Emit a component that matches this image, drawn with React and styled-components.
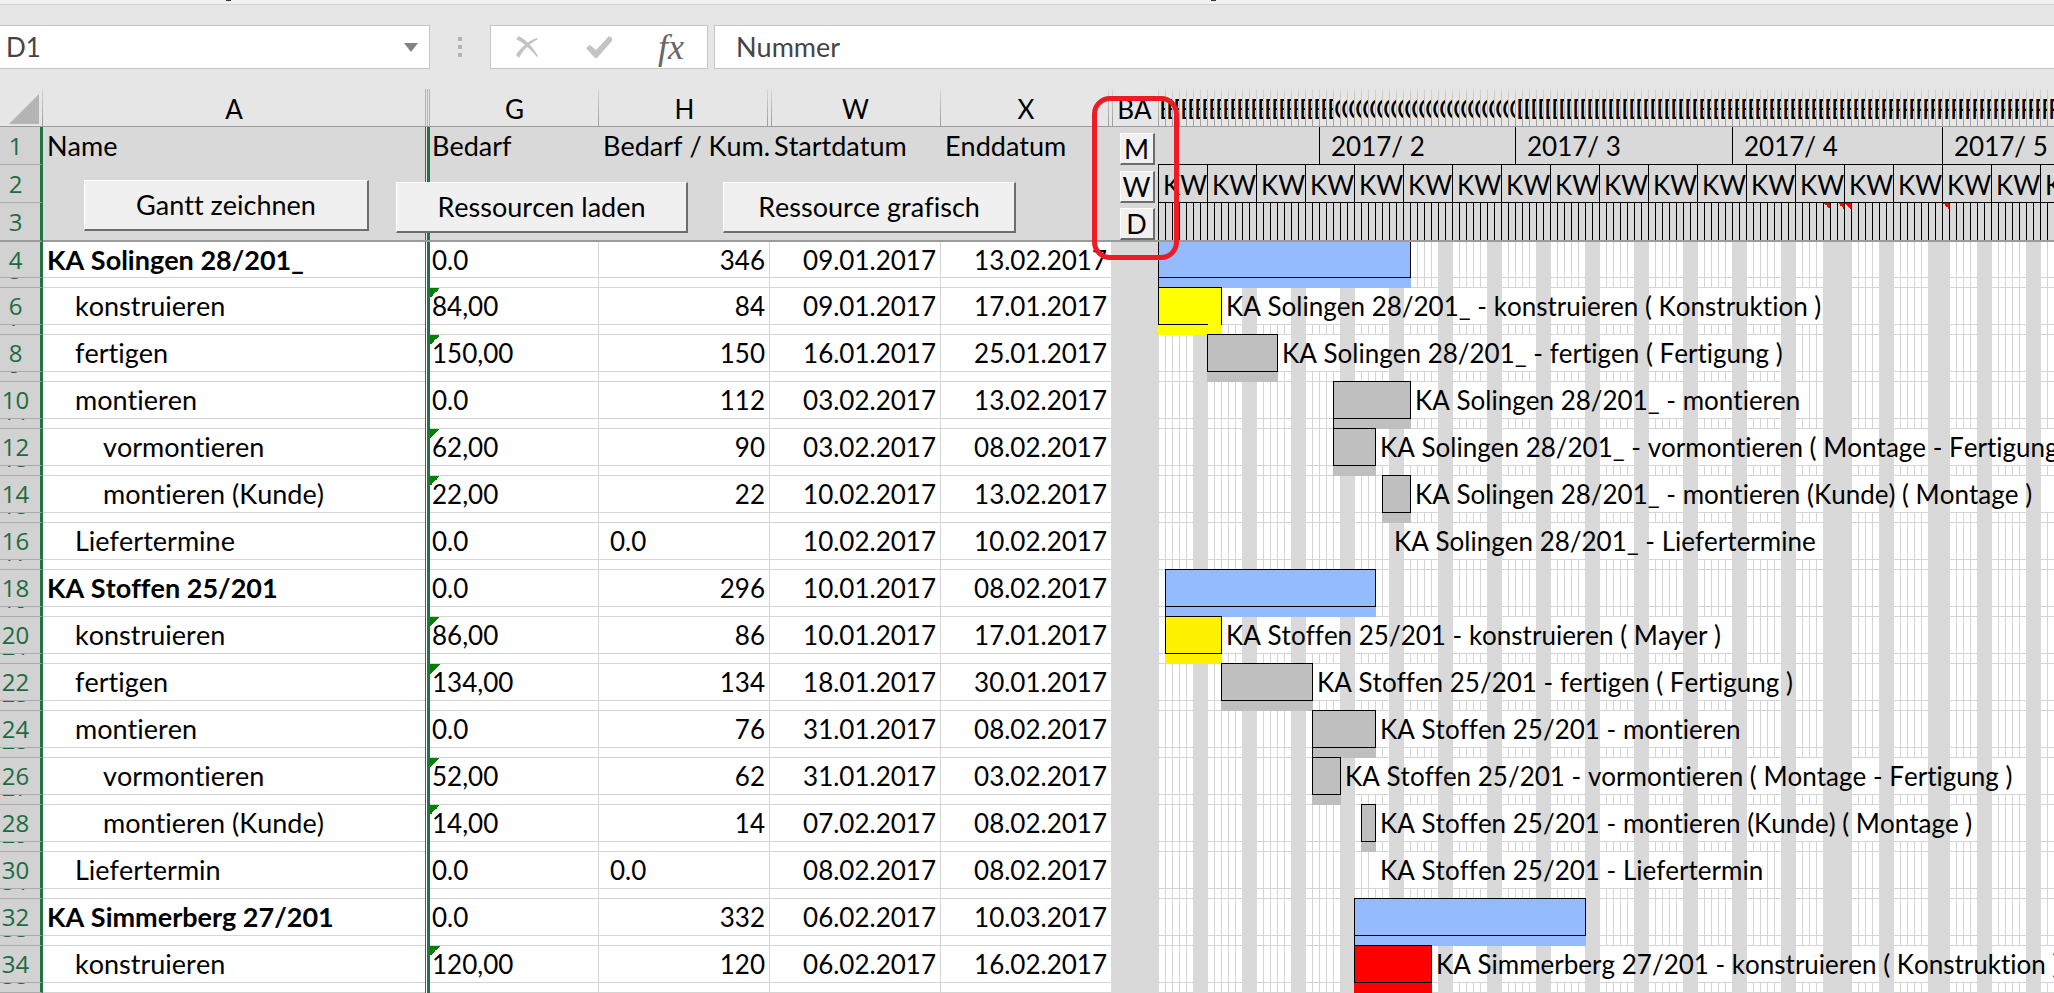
import styled, { createGlobalStyle } from "styled-components";

const DAY = 7;
const HOLIDAYS = [[95, 96], [98, 99], [112, 113]];
const NOTES = [95, 97, 98, 112];

const tasks = [
  { no: 4, name: "KA Solingen 28/201_", level: 0, need: "0.0", sum: "346", start: "09.01.2017", end: "13.02.2017", from: 0, to: 36, color: "#95bbff", edge: true },
  { no: 6, name: "konstruieren", level: 1, need: "84,00", sum: "84", start: "09.01.2017", end: "17.01.2017", from: 0, to: 9, color: "#ffff00", open: true, label: "KA Solingen 28/201_ - konstruieren ( Konstruktion )", span: 88 },
  { no: 8, name: "fertigen", level: 1, need: "150,00", sum: "150", start: "16.01.2017", end: "25.01.2017", from: 7, to: 17, color: "#bfbfbf", label: "KA Solingen 28/201_ - fertigen ( Fertigung )", span: 74 },
  { no: 10, name: "montieren", level: 1, need: "0.0", sum: "112", start: "03.02.2017", end: "13.02.2017", from: 25, to: 36, color: "#bfbfbf", edge: true, label: "KA Solingen 28/201_ - montieren", span: 57 },
  { no: 12, name: "vormontieren", level: 2, need: "62,00", sum: "90", start: "03.02.2017", end: "08.02.2017", from: 25, to: 31, color: "#bfbfbf", label: "KA Solingen 28/201_ - vormontieren ( Montage - Fertigung )", span: 99 },
  { no: 14, name: "montieren (Kunde)", level: 2, need: "22,00", sum: "22", start: "10.02.2017", end: "13.02.2017", from: 32, to: 36, color: "#bfbfbf", label: "KA Solingen 28/201_ - montieren (Kunde) ( Montage )", span: 92 },
  { no: 16, name: "Liefertermine", level: 1, need: "0.0", sum: "0.0", start: "10.02.2017", end: "10.02.2017", from: 33, to: 33, label: "KA Solingen 28/201_ - Liefertermine", span: 62 },
  { no: 18, name: "KA Stoffen 25/201", level: 0, need: "0.0", sum: "296", start: "10.01.2017", end: "08.02.2017", from: 1, to: 31, color: "#95bbff", edge: true },
  { no: 20, name: "konstruieren", level: 1, need: "86,00", sum: "86", start: "10.01.2017", end: "17.01.2017", from: 1, to: 9, color: "#fff200", label: "KA Stoffen 25/201 - konstruieren ( Mayer )", span: 73 },
  { no: 22, name: "fertigen", level: 1, need: "134,00", sum: "134", start: "18.01.2017", end: "30.01.2017", from: 9, to: 22, color: "#bfbfbf", label: "KA Stoffen 25/201 - fertigen ( Fertigung )", span: 70 },
  { no: 24, name: "montieren", level: 1, need: "0.0", sum: "76", start: "31.01.2017", end: "08.02.2017", from: 22, to: 31, color: "#bfbfbf", edge: true, label: "KA Stoffen 25/201 - montieren", span: 53 },
  { no: 26, name: "vormontieren", level: 2, need: "52,00", sum: "62", start: "31.01.2017", end: "03.02.2017", from: 22, to: 26, color: "#bfbfbf", label: "KA Stoffen 25/201 - vormontieren ( Montage - Fertigung )", span: 98 },
  { no: 28, name: "montieren (Kunde)", level: 2, need: "14,00", sum: "14", start: "07.02.2017", end: "08.02.2017", from: 29, to: 31, color: "#bfbfbf", label: "KA Stoffen 25/201 - montieren (Kunde) ( Montage )", span: 88 },
  { no: 30, name: "Liefertermin", level: 1, need: "0.0", sum: "0.0", start: "08.02.2017", end: "08.02.2017", from: 31, to: 31, label: "KA Stoffen 25/201 - Liefertermin", span: 56 },
  { no: 32, name: "KA Simmerberg 27/201", level: 0, need: "0.0", sum: "332", start: "06.02.2017", end: "10.03.2017", from: 28, to: 61, color: "#95bbff", edge: true },
  { no: 34, name: "konstruieren", level: 1, need: "120,00", sum: "120", start: "06.02.2017", end: "16.02.2017", from: 28, to: 39, color: "#ff0000", label: "KA Simmerberg 27/201 - konstruieren ( Konstruktion )", span: 92 },
];

const months = [
  { name: "", days: 23 },
  { name: "2017/ 2", days: 28 },
  { name: "2017/ 3", days: 31 },
  { name: "2017/ 4", days: 30 },
  { name: "2017/ 5", days: 31 },
];

const weeks = Array.from({ length: 20 }, (_, i) => i);
const days = Array.from({ length: 140 }, (_, i) => i);

// columns start at BB, only the first letter fits into a day
const columnLetter = (i) => String.fromCharCode(65 + Math.floor((i + 27) / 26));

const App = () => {
  return (
    <>
      <GlobalStyle />
      <Ribbon />
      <FormulaBar />
      <Sheet>
        <colgroup>
          <col width="43" />
          <col width="382" />
          <col width="5" />
          <col width="169" />
          <col width="171" />
          <col width="171" />
          <col width="170" />
          <col width="47" />
          <col />
        </colgroup>
        <thead>
          <tr>
            <Corner $right>
              <svg width="30" height="30" aria-hidden="true">
                <path d="M30 0V30H0Z" fill="#b4b4b4" />
              </svg>
            </Corner>
            <ColumnHead scope="col">A</ColumnHead>
            <HiddenHead />
            <ColumnHead scope="col" $right>G</ColumnHead>
            <ColumnHead scope="col" $right $inset>H</ColumnHead>
            <ColumnHead scope="col" $right $left>W</ColumnHead>
            <ColumnHead scope="col" $right $inset>X</ColumnHead>
            <ColumnHead scope="col" $left>BA</ColumnHead>
            <DayHeads>
              <Strip>
                {days.map((d) => (
                  <DayHead key={d}>{columnLetter(d)}</DayHead>
                ))}
              </Strip>
            </DayHeads>
          </tr>
        </thead>
        <tbody>
          <tr>
            <RowHead $tall>1</RowHead>
            <TitleCell $pad>Name</TitleCell>
            <SplitCell />
            <TitleCell>Bedarf</TitleCell>
            <TitleCell $pad>Bedarf / Kum.</TitleCell>
            <TitleCell $pad>Startdatum</TitleCell>
            <TitleCell $pad>Enddatum</TitleCell>
            <TitleCell $center>
              <Zoom type="button">M</Zoom>
            </TitleCell>
            <ScaleCell>
              <Strip>
                {months.map((m, i) => (
                  <Month key={i} $days={m.days} $first={i === 0}>{m.name}</Month>
                ))}
              </Strip>
            </ScaleCell>
          </tr>
          <tr>
            <RowHead $tall>2</RowHead>
            <TitleCell>
              <Macros>
                <Macro type="button" $width={285}>Gantt zeichnen</Macro>
                <Macro type="button" $width={292} $low>Ressourcen laden</Macro>
                <Macro type="button" $width={293} $low $gap>Ressource grafisch</Macro>
              </Macros>
            </TitleCell>
            <SplitCell />
            <TitleCell colSpan={4} />
            <TitleCell $center>
              <Zoom type="button">W</Zoom>
            </TitleCell>
            <ScaleCell>
              <Strip>
                {weeks.map((w) => (
                  <Week key={w}>KW</Week>
                ))}
              </Strip>
            </ScaleCell>
          </tr>
          <FreezeRow>
            <RowHead $tall>3</RowHead>
            <TitleCell />
            <SplitCell />
            <TitleCell colSpan={4} />
            <TitleCell $center>
              <Zoom type="button">D</Zoom>
            </TitleCell>
            <ScaleCell>
              <Strip>
                {days.map((d) => (
                  <Tick key={d} $note={NOTES.includes(d)} />
                ))}
              </Strip>
            </ScaleCell>
          </FreezeRow>
          {tasks.map((task) => (
            <TaskRows key={task.no} task={task} />
          ))}
        </tbody>
      </Sheet>
      <Highlight />
    </>
  );
};

const Ribbon = () => (
  <RibbonEdge>
    <i />
    <i />
  </RibbonEdge>
);

const FormulaBar = () => (
  <Bar>
    <NameBox>
      <NameInput aria-label="Name box" defaultValue="D1" />
      <svg width="14" height="9" aria-hidden="true">
        <path d="M0 0H14L7 9Z" fill="#7f8583" />
      </svg>
    </NameBox>
    <Grip aria-hidden="true">
      <i />
      <i />
      <i />
    </Grip>
    <Tools>
      <Tool type="button" aria-label="Cancel">
        <svg width="24" height="22" viewBox="0 0 24 22" aria-hidden="true">
          <path d="M1 3L4 0C11 4 18 11 23 20L22 21C16 14 9 7 1 3Z" fill="#c3c3c3" />
          <path d="M23 3L22 2C13 5 6 11 1 19L4 22C8 14 14 8 23 3Z" fill="#c3c3c3" />
        </svg>
      </Tool>
      <Tool type="button" aria-label="Enter">
        <svg width="26" height="22" viewBox="0 0 26 22" aria-hidden="true">
          <path d="M0 12L4 9L10 14L23 0L26 2V5L11 22H9Z" fill="#c3c3c3" />
        </svg>
      </Tool>
      <Tool type="button" aria-label="Insert function">
        <Fx>fx</Fx>
      </Tool>
    </Tools>
    <Formula aria-label="Formula" defaultValue="Nummer" />
  </Bar>
);

const TaskRows = ({ task }) => {
  const error = task.need !== "0.0";
  const first = task.no === 4;
  const width = (task.to - task.from) * DAY + 1;
  return (
    <>
      <tr>
        <RowHead $first={first}>{task.no}</RowHead>
        <Cell $name $level={task.level} $noEdge>{task.name}</Cell>
        <SplitCell $white />
        <Cell $error={error} $tight>{task.need}</Cell>
        <Cell $align={task.sum === "0.0" ? "left" : "right"}>{task.sum}</Cell>
        <Cell $align="right">{task.start}</Cell>
        <Cell $align="right" $noEdge>{task.end}</Cell>
        <Spacer />
        <Gantt>
          <Track $height={first ? 36 : 37}>
            <Items style={{ paddingLeft: task.from * DAY }}>
              {task.color && (
                <TaskBar $color={task.color} $first={first} $open={task.open} style={{ width }} />
              )}
              {task.label && (
                <Label $bare={!task.color} style={{ width: task.span * DAY - 1 }}>
                  <span>{task.label}</span>
                </Label>
              )}
            </Items>
          </Track>
        </Gantt>
      </tr>
      <tr>
        <RowHead $slim>
          <Peek>
            <span>{task.no + 1}</span>
          </Peek>
        </RowHead>
        <Cell $noEdge $slim />
        <SplitCell $white />
        <Cell $slim />
        <Cell $slim />
        <Cell $slim />
        <Cell $noEdge $slim />
        <Spacer />
        <Gantt>
          <Track $height={10}>
            <Items style={{ paddingLeft: task.from * DAY }}>
              {task.color && <Shadow $color={task.color} $edge={task.edge} style={{ width }} />}
            </Items>
          </Track>
        </Gantt>
      </tr>
    </>
  );
};

const GlobalStyle = createGlobalStyle`
  * {
    box-sizing: border-box;
  }
  body {
    margin: 0;
    overflow: hidden;
    background: #e6e6e6;
    color: #000;
    font: 26px/34px Lato, "Liberation Sans", sans-serif;
    font-kerning: none;
    font-variant-ligatures: none;
  }
  button, input {
    font: inherit;
    font-kerning: inherit;
    font-variant-ligatures: inherit;
    color: inherit;
  }
`;

const RibbonEdge = styled.div`
  display: flex;
  gap: 980px;
  height: 5px;
  padding-left: 226px;
  background: #f1f1f1;
  border-bottom: 1px solid #d2d2d2;
  i {
    width: 5px;
    height: 1px;
    background: #333;
  }
`;

const Bar = styled.div`
  display: flex;
  height: 84px;
  padding: 20px 0 20px;
  color: #444;
`;

const NameBox = styled.div`
  display: flex;
  align-items: center;
  width: 430px;
  padding-right: 11px;
  background: #fff;
  border: 1px solid #c6c6c6;
  border-left: 0;
`;

const NameInput = styled.input`
  flex: 1;
  min-width: 0;
  padding: 0 6px;
  border: 0;
  outline: 0;
  background: none;
`;

const Grip = styled.div`
  display: flex;
  flex-direction: column;
  justify-content: center;
  align-items: center;
  gap: 4px;
  width: 60px;
  i {
    width: 4px;
    height: 4px;
    background: #b4b4b4;
  }
`;

const Tools = styled.div`
  display: flex;
  width: 218px;
  background: #fff;
  border: 1px solid #c6c6c6;
`;

const Tool = styled.button`
  display: flex;
  flex: 1;
  align-items: center;
  justify-content: center;
  padding: 0;
  border: 0;
  background: none;
`;

const Fx = styled.span`
  font: italic 36px/32px "Liberation Serif", serif;
  color: #666;
`;

const Formula = styled.input`
  flex: 1;
  min-width: 0;
  margin-left: 6px;
  padding: 0 21px;
  border: 1px solid #c6c6c6;
  border-right: 0;
  border-radius: 0;
  outline: 0;
  background: #fff;
  font-size: 27px;
`;

const Sheet = styled.table`
  width: 100%;
  table-layout: fixed;
  border-collapse: separate;
  border-spacing: 0;
  th, td {
    padding: 0;
    font-weight: normal;
    white-space: nowrap;
  }
`;

const headLine = "linear-gradient(#d6d6d6, #9c9c9c)";

const ColumnHead = styled.th`
  height: 38px;
  border-bottom: 1px solid #9b9b9b;
  background-color: #e6e6e6;
  background-image: ${(p) => (p.$right ? headLine : "none")}, ${(p) => (p.$left ? headLine : "none")};
  background-position: right ${(p) => (p.$inset ? 2 : 0)}px top, left 1px top;
  background-size: 1px 100%;
  background-repeat: no-repeat;
  thead & {
    padding-top: 3px;
  }
`;

const Corner = styled(ColumnHead)`
  svg {
    display: block;
    margin-left: 9px;
  }
`;

const HiddenHead = styled.th`
  border-bottom: 1px solid #9b9b9b;
  background: repeating-linear-gradient(90deg, #b4b4b4 0 1px, #e6e6e6 1px 2px);
`;

const DayHeads = styled.th`
  border-bottom: 1px solid #9b9b9b;
`;

const Strip = styled.div`
  display: flex;
  overflow: hidden;
`;

const DayHead = styled.span`
  flex: none;
  width: ${DAY}px;
  height: 37px;
  padding-left: 1px;
  overflow: hidden;
  line-height: 40px;
  text-align: left;
  background: ${headLine} left / 1px 100% no-repeat;
`;

const rowHeight = (p) => (p.$slim ? 10 : p.$tall ? 38 : p.$first ? 36 : 37);

const RowHead = styled.th`
  height: ${rowHeight}px;
  background: #d2d2d2;
  border-right: 3px solid #217346;
  border-bottom: 1px solid #ababab;
  color: #1e6b41;
  font-family: "Open Sans", sans-serif;
  font-size: 24px;
  tbody & {
    padding-right: 9px;
  }
`;

/* bottom aligned, so a slim row shows just the feet of its number */
const Peek = styled.div`
  display: flex;
  justify-content: center;
  align-items: flex-end;
  height: 9px;
  overflow: hidden;
`;

const TitleCell = styled.td`
  height: 38px;
  background: #d9d9d9;
  font-size: 27px;
  text-align: ${(p) => (p.$center ? "center" : "left")};
  tbody & {
    padding-left: ${(p) => (p.$pad ? 4 : p.$center ? 5 : 2)}px;
  }
`;

const SplitCell = styled.td`
  background: linear-gradient(90deg, #217346 0 1px, ${(p) => (p.$white ? "#fff" : "#e6e6e6")} 1px 2px, #217346 2px 5px);
`;

const Zoom = styled.button`
  display: block;
  width: 35px;
  height: 32px;
  margin: 5px auto 0;
  padding: 0;
  line-height: 30px;
  background: #f0f0f0;
  border: 1px solid #fff;
  border-right: 2px solid #6d6d6d;
  border-bottom: 2px solid #6d6d6d;
`;

/* the sheet buttons float over the title cells */
const Macros = styled.div`
  position: absolute;
  top: 180px;
  left: 84px;
  display: flex;
  gap: 27px;
  z-index: 3;
`;

const Macro = styled.button`
  width: ${(p) => p.$width}px;
  height: 51px;
  margin-top: ${(p) => (p.$low ? 2 : 0)}px;
  margin-left: ${(p) => (p.$gap ? 8 : 0)}px;
  padding: 0;
  background: #f0f0f0;
  border: 1px solid #fff;
  border-right: 2px solid #6d6d6d;
  border-bottom: 2px solid #6d6d6d;
`;

const ScaleCell = styled.td`
  height: 38px;
  background: #d9d9d9;
  border-bottom: 1px solid #000;
`;

const Month = styled.span`
  flex: none;
  width: ${(p) => p.$days * DAY}px;
  height: 37px;
  padding-left: 11px;
  line-height: 38px;
  border-left: ${(p) => (p.$first ? "0" : "1px solid #000")};
`;

const Week = styled.span`
  flex: none;
  width: ${7 * DAY}px;
  height: 37px;
  padding-left: 4px;
  line-height: 40px;
  border-left: 1px solid #000;
`;

const Tick = styled.span`
  flex: none;
  width: ${DAY}px;
  height: 37px;
  border-left: 1px solid #000;
  background: ${(p) => (p.$note ? "linear-gradient(45deg, transparent 50%, #f00 50%) right top / 6px 6px no-repeat" : "none")};
`;

const FreezeRow = styled.tr`
  th, td {
    height: 39px;
    border-bottom: 2px solid #9b9b9b;
  }
`;

const Cell = styled.td`
  height: ${(p) => (p.$slim ? 10 : 36)}px;
  background: ${(p) => (p.$error ? "linear-gradient(135deg, #008000 50%, transparent 50%) left top / 10px 10px no-repeat, #fff" : "#fff")};
  border-right: ${(p) => (p.$noEdge ? "0" : "1px solid #d4d4d4")};
  border-bottom: 1px solid #d4d4d4;
  font-size: ${(p) => (p.$name ? 27 : 26)}px;
  text-align: ${(p) => p.$align || "left"};
  tbody & {
    padding-left: ${(p) => (p.$tight ? 2 : p.$align ? 11 : 4 + (p.$level || 0) * 28)}px;
    padding-right: 4px;
    font-weight: ${(p) => (p.$level === 0 ? "bold" : "normal")};
  }
`;

const Spacer = styled.td`
  background: #d9d9d9;
`;

const Gantt = styled.td`
  background:
    linear-gradient(#d4d4d4, #d4d4d4) left bottom / 100% 1px no-repeat,
    repeating-linear-gradient(90deg, #d4d4d4 0 1px, #fff 1px ${DAY}px);
`;

const holidayBands = HOLIDAYS.map(
  ([a, b]) => `linear-gradient(90deg, transparent ${a * DAY}px, #d9d9d9 ${a * DAY}px ${b * DAY + 1}px, transparent ${b * DAY + 1}px)`
).join(", ");

const Track = styled.div`
  position: relative;
  height: ${(p) => p.$height}px;
  &::before {
    content: "";
    position: absolute;
    inset: 0;
    z-index: 1;
    background: ${holidayBands}, repeating-linear-gradient(90deg, #d9d9d9 0 1px, transparent 1px 35px, #d9d9d9 35px 49px);
  }
`;

const Items = styled.div`
  display: flex;
  height: 100%;
`;

const TaskBar = styled.div`
  position: relative;
  z-index: 2;
  flex: none;
  margin-top: ${(p) => (p.$first ? 0 : -1)}px;
  background: ${(p) => p.$color};
  border: 1px solid #000;
  border-top-width: ${(p) => (p.$first ? 0 : 1)}px;
  &::after {
    content: "";
    display: ${(p) => (p.$open ? "block" : "none")};
    position: absolute;
    right: 0;
    bottom: -1px;
    width: 13px;
    height: 1px;
    background: ${(p) => p.$color};
  }
`;

const Label = styled.div`
  flex: none;
  margin-bottom: 1px;
  padding-left: ${(p) => (p.$bare ? 5 : 4)}px;
  background: #fff;
  line-height: 36px;
  white-space: nowrap;
  span {
    position: relative;
    z-index: 2;
  }
`;

const Shadow = styled.div`
  position: relative;
  z-index: 2;
  flex: none;
  background: ${(p) => p.$color};
  border-left: ${(p) => (p.$edge ? "1px solid #000" : "0")};
`;

const Highlight = styled.div`
  position: absolute;
  top: 96px;
  left: 1092px;
  width: 87px;
  height: 164px;
  border: 5px solid #ed1c24;
  border-radius: 18px;
  pointer-events: none;
  z-index: 4;
`;

export default App;
